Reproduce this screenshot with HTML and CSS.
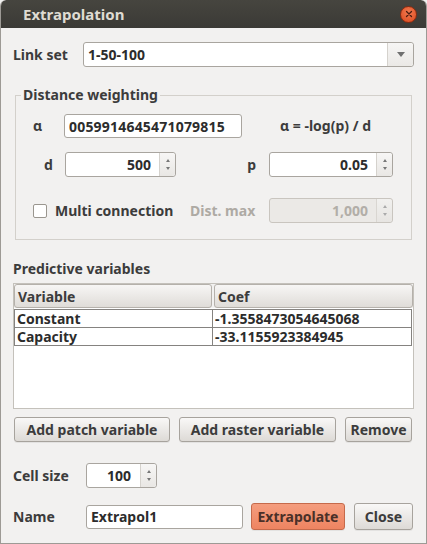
FILE: index.html
```html
<!DOCTYPE html>
<html>
<head>
<meta charset="utf-8">
<link rel="stylesheet" href="styles.css">
</head>
<body>
<div class="window">
  <div class="titlebar">
    <span class="title">Extrapolation</span>
    <span class="close-btn"><svg width="8" height="8" viewBox="0 0 8 8"><path d="M1.5 1.5 L6.5 6.5 M6.5 1.5 L1.5 6.5" stroke="#4a1c10" stroke-width="1.3" stroke-linecap="round"/></svg></span>
  </div>
  <div class="content">
    <div class="row link-row">
      <span class="lbl link-lbl">Link set</span>
      <div class="combo">
        <span class="combo-text">1-50-100</span>
        <span class="combo-btn"><span class="tri-down"></span></span>
      </div>
    </div>

    <fieldset class="group">
      <legend>Distance weighting</legend>
      <div class="grow alpha-row">
        <span class="lbl alpha-lbl">α</span>
        <div class="field alpha-field"><span class="alpha-text">0059914645471079815</span></div>
        <span class="lbl formula">α = -log(p) / d</span>
      </div>
      <div class="grow d-row">
        <span class="lbl d-lbl">d</span>
        <div class="spin d-spin">
          <span class="spin-val">500</span>
          <span class="spin-btns"><span class="tri-up"></span><span class="tri-dn"></span></span>
        </div>
        <span class="lbl p-lbl">p</span>
        <div class="spin p-spin">
          <span class="spin-val">0.05</span>
          <span class="spin-btns"><span class="tri-up"></span><span class="tri-dn"></span></span>
        </div>
      </div>
      <div class="grow multi-row">
        <span class="check"></span>
        <span class="lbl multi-lbl">Multi connection</span>
        <span class="lbl dis-lbl">Dist. max</span>
        <div class="spin p-spin disabled">
          <span class="spin-val">1,000</span>
          <span class="spin-btns"><span class="tri-up"></span><span class="tri-dn"></span></span>
        </div>
      </div>
    </fieldset>

    <div class="lbl pred-lbl">Predictive variables</div>
    <div class="table">
      <div class="thead">
        <div class="th th1">Variable</div>
        <div class="th th2">Coef</div>
      </div>
      <div class="tr">
        <div class="td td1">Constant</div>
        <div class="td td2">-1.3558473054645068</div>
      </div>
      <div class="tr">
        <div class="td td1">Capacity</div>
        <div class="td td2">-33.1155923384945</div>
      </div>
    </div>

    <div class="btn-row">
      <button class="btn b-patch">Add patch variable</button>
      <button class="btn b-raster">Add raster variable</button>
      <button class="btn b-remove">Remove</button>
    </div>

    <div class="row cell-row">
      <span class="lbl cell-lbl">Cell size</span>
      <div class="spin cell-spin">
        <span class="spin-val">100</span>
        <span class="spin-btns"><span class="tri-up"></span><span class="tri-dn"></span></span>
      </div>
    </div>

    <div class="row name-row">
      <span class="lbl name-lbl">Name</span>
      <div class="field name-field"><span>Extrapol1</span></div>
      <button class="btn b-extra">Extrapolate</button>
      <button class="btn b-close">Close</button>
    </div>
  </div>
</div>
</body>
</html>
```

FILE: styles.css
```css
* { box-sizing: border-box; }
html, body { margin: 0; padding: 0; background: #f2f1f0; }
body {
  font-family: "Noto Sans", "DejaVu Sans", sans-serif;
  font-weight: 700;
  font-size: 14px;
  color: #3c3c3c;
}
.window {
  width: 427px;
  height: 544px;
  background: #f2f1f0;
  border-left: 1px solid #9d9a95;
  border-right: 1px solid #9d9a95;
  border-bottom: 1px solid #9d9a95;
  border-radius: 6px 6px 0 0;
  overflow: hidden;
  position: relative;
}
.titlebar {
  height: 28px;
  margin: 0 -1px;
  background: linear-gradient(#46453f, #3b3a36);
  border-radius: 6px 6px 0 0;
  display: flex;
  align-items: center;
  padding-left: 23px;
}
.title {
  color: #dfdbd2;
  font-size: 15px;
  font-weight: 700;
  flex: 1;
}
.close-btn {
  width: 17px; height: 17px;
  border-radius: 50%;
  background: radial-gradient(circle at 50% 35%, #f27a50, #d9481d);
  border: 1px solid #8a2b10;
  margin-right: 10px;
  display: flex; align-items: center; justify-content: center;
}
.content {
  padding: 14px 12px 0 12px;
}
.row { display: flex; align-items: center; }
.lbl { white-space: nowrap; line-height: 16px; }

.link-lbl { width: 70px; }
.combo {
  flex: 1;
  height: 25px;
  border: 1px solid #a9a59f;
  border-radius: 3px;
  background: #fff;
  display: flex;
  align-items: center;
}
.combo-text { flex: 1; padding-left: 4px; color: #2c2c2c; }
.combo-btn {
  width: 26px; height: 100%;
  border-left: 1px solid #d5d2cd;
  background: linear-gradient(#f6f5f4, #ebe9e6);
  display: flex; align-items: center; justify-content: center;
  border-radius: 0 3px 3px 0;
}
.tri-down {
  width: 0; height: 0;
  border-left: 4px solid transparent;
  border-right: 4px solid transparent;
  border-top: 5px solid #707070;
}

.group {
  margin: 20px 2px 0 2px;
  padding: 0;
  border: 1px solid #d3d0cb;
  height: 153px;
}
.group legend {
  margin-left: 5px;
  padding: 0 2px;
  line-height: 16px;
}
.grow { display: flex; align-items: center; }
.alpha-row { margin-top: 11px; }
.alpha-lbl { width: 48px; padding-left: 17px; }
.field {
  height: 24px;
  border: 1px solid #a9a59f;
  border-radius: 3px;
  background: #fff;
  display: flex; align-items: center;
  padding-left: 4px;
  overflow: hidden;
  color: #2c2c2c;
}
.alpha-field { width: 178px; }
.alpha-text { letter-spacing: 0.2px; }
.formula { margin-left: 38px; }

.d-row { margin-top: 14px; }
.d-lbl { width: 49px; padding-left: 28px; }
.spin {
  height: 25px;
  border: 1px solid #a9a59f;
  border-radius: 3px;
  background: #fff;
  display: flex; align-items: stretch;
  color: #2c2c2c;
}
.spin-val {
  flex: 1; text-align: right;
  padding-right: 8px;
  display: flex; align-items: center; justify-content: flex-end;
}
.spin-btns {
  width: 16px;
  border-left: 1px solid #d5d2cd;
  background: linear-gradient(#f7f6f5, #e9e7e4);
  border-radius: 0 3px 3px 0;
  display: flex; flex-direction: column; align-items: center; justify-content: center;
  gap: 5px;
}
.tri-up {
  width: 0; height: 0;
  border-left: 2.5px solid transparent;
  border-right: 2.5px solid transparent;
  border-bottom: 3px solid #777;
}
.tri-dn {
  width: 0; height: 0;
  border-left: 2.5px solid transparent;
  border-right: 2.5px solid transparent;
  border-top: 3px solid #777;
}
.d-spin { width: 111px; }
.p-lbl { width: 93px; text-align: right; padding-right: 13px; }
.p-spin { width: 124px; }

.multi-row { margin-top: 21px; }
.check {
  width: 14px; height: 14px;
  border: 1px solid #9a968f;
  border-radius: 2px;
  background: #fff;
  margin-left: 17px;
}
.multi-lbl { margin-left: 8px; width: 135px; }
.dis-lbl { color: #aeaaa4; width: 79px; }
.spin.disabled { background: #ebe9e6; border-color: #c9c5bf; color: #b2aea8; }
.spin.disabled .spin-btns { background: linear-gradient(#f1f0ee, #e7e5e2); border-left-color: #d9d6d1; }
.spin.disabled .tri-up { border-bottom-color: #aaa; }
.spin.disabled .tri-dn { border-top-color: #aaa; }

.pred-lbl { margin-top: 21px; }
.table {
  margin-top: 6px;
  height: 126px;
  border: 1px solid #c4c1bb;
  background: #fff;
}
.thead {
  display: flex;
  gap: 2px;
  background: #f2f1f0;
  height: 24px;
}
.th {
  height: 24px;
  border: 1px solid #b5b1ab;
  border-radius: 3px;
  background: linear-gradient(#f7f6f5, #dfdcd8);
  padding-left: 3px;
  display: flex; align-items: center;
  font-weight: 700;
}
.th1 { width: 198px; }
.th2 { flex: 1; }
.tr { display: flex; height: 18px; }
.td {
  height: 18px;
  border-bottom: 1px solid #858380;
  border-right: 1px solid #858380;
  display: flex; align-items: center;
  padding-left: 2px;
  color: #2c2c2c;
}
.thead + .tr .td { border-top: 1px solid #858380; height: 19px; }
.thead + .tr { height: 19px; margin-top: 1px; }
.td1 { width: 199px; border-left: 1px solid #858380; }
.td2 { width: 199px; }

.btn-row { display: flex; margin-top: 8px; padding-left: 1px; }
.btn {
  font-family: inherit;
  font-weight: 700;
  font-size: 14px;
  color: #3c3c3c;
  height: 25px;
  border: 1px solid #a7a39d;
  border-radius: 3px;
  background: linear-gradient(#f9f8f7, #dddad6);
  box-shadow: 0 1px 0 rgba(0,0,0,0.06);
  padding: 0;
  margin: 0;
}
.b-patch { width: 156px; }
.b-raster { width: 157px; margin-left: 9px; }
.b-remove { width: 67px; margin-left: 9px; }

.cell-row { margin-top: 21px; }
.cell-lbl { width: 73px; }
.cell-spin { width: 71px; }
.cell-spin .spin-val { padding-right: 9px; }

.name-row { margin-top: 15px; }
.name-lbl { width: 73px; }
.name-field { width: 157px; height: 24px; }
.b-extra {
  width: 94px; height: 27px;
  margin-left: 8px;
  background: linear-gradient(#f49d7e, #ee8461);
  border-color: #c56a4b;
  color: #4a3028;
}
.b-close { width: 59px; height: 27px; margin-left: 9px; }
```
